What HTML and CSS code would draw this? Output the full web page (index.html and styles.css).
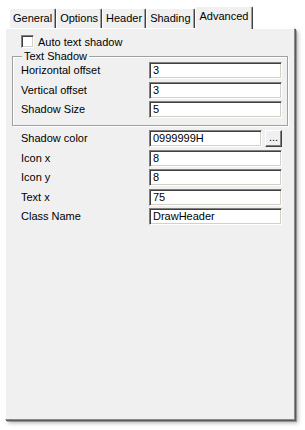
FILE: index.html
```html
<!DOCTYPE html>
<html>
<head>
<meta charset="utf-8">
<link rel="stylesheet" href="styles.css">
</head>
<body>
<div class="window">
  <div class="tabs">
    <div class="tab">General</div>
    <div class="tab">Options</div>
    <div class="tab">Header</div>
    <div class="tab">Shading</div>
    <div class="tab active">Advanced</div>
  </div>
  <div class="panel">
    <label class="check-row"><span class="checkbox"></span><span>Auto text shadow</span></label>
    <div class="group">
      <div class="legend">Text Shadow</div>
      <div class="rows">
        <div class="label">Horizontal offset</div><div class="field">3</div>
        <div class="label">Vertical offset</div><div class="field">3</div>
        <div class="label">Shadow Size</div><div class="field">5</div>
      </div>
    </div>
    <div class="rows outer">
      <div class="label">Shadow color</div>
      <div class="field-with-btn"><div class="field">0999999H</div><div class="btn">...</div></div>
      <div class="label">Icon x</div><div class="field">8</div>
      <div class="label">Icon y</div><div class="field">8</div>
      <div class="label">Text x</div><div class="field">75</div>
      <div class="label">Class Name</div><div class="field">DrawHeader</div>
    </div>
  </div>
</div>
</body>
</html>
```
FILE: styles.css
```css
* { box-sizing: border-box; }
html, body { margin: 0; padding: 0; background: #ffffff; }
body {
  font-family: "Liberation Sans", Arial, sans-serif;
  font-size: 11px;
  color: #000;
  width: 305px;
  height: 430px;
  overflow: hidden;
}
.window {
  padding: 6px 0 0 5px;
}
.tabs {
  display: flex;
  align-items: flex-end;
  padding-left: 4px;
  height: 22px;
  position: relative;
  z-index: 2;
}
.tab {
  height: 20px;
  line-height: 18px;
  padding: 0 3px 0 3px;
  background: #f0f0f0;
  border-top: 1px solid #ffffff;
  border-left: 1px solid #ffffff;
  border-right: 1px solid #404040;
  box-shadow: inset -1px 0 #a0a0a0;
  border-radius: 2px 2px 0 0;
  white-space: nowrap;
}
.tab.active {
  height: 23px;
  margin-bottom: -1px;
  line-height: 19px;
  padding: 0 4px;
}
.panel {
  width: 290px;
  height: 392px;
  background: #f0f0f0;
  border-top: 1px solid #ffffff;
  border-left: 1px solid #ffffff;
  border-right: 1px solid #8a8a8a;
  border-bottom: 1px solid #8a8a8a;
  box-shadow: 1px 1px 0 #5a5a5a, 2px 2px 0 rgba(0,0,0,0.25), 3px 3px 4px rgba(0,0,0,0.3);
  padding-top: 6px;
  position: relative;
  z-index: 1;
}
.check-row {
  display: flex;
  align-items: center;
  gap: 4px;
  padding-left: 15px;
  height: 13px;
}
.checkbox {
  width: 13px;
  height: 13px;
  background: #fff;
  border: 1px solid;
  border-color: #808080 #ffffff #ffffff #808080;
  box-shadow: inset 1px 1px #404040, inset -1px -1px #d4d0c8;
}
.group {
  margin: 8px 0 0 6px;
  width: 276px;
  border: 1px solid #a0a0a0;
  box-shadow: inset 1px 1px #ffffff, 1px 1px #ffffff;
  padding: 0 4px 7px 8px;
}
.legend {
  margin-top: -7px;
  margin-left: 1px;
  height: 12px;
  line-height: 12px;
  padding: 0 2px;
  background: #f0f0f0;
  width: fit-content;
}
.rows {
  display: grid;
  grid-template-columns: 128px 133px;
  grid-auto-rows: 17px;
  row-gap: 2.5px;
}
.rows.outer {
  margin-top: 4px;
  padding-left: 15px;
}
.label {
  line-height: 17px;
  white-space: nowrap;
}
.field {
  background: #fff;
  border: 1px solid;
  border-color: #808080 #ffffff #ffffff #808080;
  box-shadow: inset 1px 1px #404040, inset -1px -1px #d4d0c8;
  padding-left: 3px;
  line-height: 15px;
  height: 17px;
}
.field-with-btn {
  display: flex;
  gap: 3px;
}
.field-with-btn .field {
  flex: 1;
}
.btn {
  width: 17px;
  height: 17px;
  background: #f0f0f0;
  border: 1px solid;
  border-color: #ffffff #404040 #404040 #ffffff;
  box-shadow: inset -1px -1px #808080;
  text-align: center;
  line-height: 13px;
  font-size: 11px;
}
```
